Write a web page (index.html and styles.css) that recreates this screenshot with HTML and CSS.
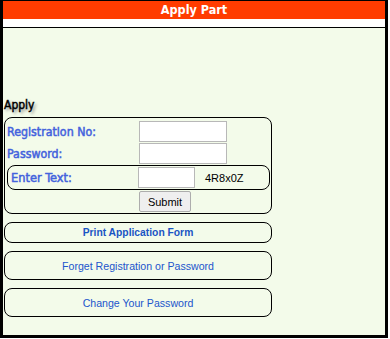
FILE: index.html
```html
<!DOCTYPE html>
<html>
<head>
<meta charset="utf-8">
<link rel="stylesheet" href="styles.css">
</head>
<body>
<div class="frame">
  <div class="header">Apply Part</div>
  <div class="header-gap"></div>
  <div class="content">
    <div class="apply-title">Apply</div>
    <div class="form-box">
      <div class="row">
        <label class="label">Registration No:</label>
        <input class="field" type="text">
      </div>
      <div class="row">
        <label class="label">Password:</label>
        <input class="field" type="password">
      </div>
      <div class="captcha-box">
        <label class="label captcha-label">Enter Text:</label>
        <input class="field short" type="text">
        <span class="captcha-code">4R8x0Z</span>
      </div>
      <div class="row submit-row">
        <span class="label"></span>
        <button class="submit" type="button">Submit</button>
      </div>
    </div>
    <div class="link-box print">Print Application Form</div>
    <div class="link-box tall">Forget Registration or Password</div>
    <div class="link-box tall">Change Your Password</div>
  </div>
</div>
</body>
</html>
```
FILE: styles.css
```css
html, body {
  margin: 0;
  padding: 0;
  background: #ffffff;
}
body {
  font-family: "DejaVu Sans", Verdana, sans-serif;
}
.frame {
  width: 382px;
  height: 334px;
  border: 3px solid #000;
  border-top-width: 1px;
  background: #f3fbea;
  display: flex;
  flex-direction: column;
}
.header {
  height: 18px;
  background: #ff3c00;
  color: #fff;
  font-family: "DejaVu Sans Condensed", "DejaVu Sans", sans-serif;
  font-weight: bold;
  font-size: 12.5px;
  line-height: 18px;
  text-align: center;
}
.header-gap {
  height: 8px;
  background: #fff;
  border-bottom: 1px solid #000;
}
.content {
  padding: 67px 0 0 1px;
}
.apply-title {
  font-family: "DejaVu Sans Condensed", "DejaVu Sans", sans-serif;
  font-size: 12px;
  -webkit-text-stroke: 0.45px #000;
  line-height: 20px;
  height: 22px;
  color: #000;
  text-shadow: 2px 2px 3px #888;
}
.form-box {
  width: 266px;
  border: 1px solid #000;
  border-radius: 8px;
  padding: 3px 0 1px 0;
}
.row {
  display: flex;
  align-items: center;
  height: 21px;
  margin-bottom: 1px;
}
.label {
  width: 132px;
  padding-left: 2px;
  font-family: "DejaVu Sans Condensed", "DejaVu Sans", sans-serif;
  font-size: 12.3px;
  -webkit-text-stroke: 0.5px #4463dd;
  color: #4463dd;
  flex: none;
}
.field {
  box-sizing: border-box;
  width: 88px;
  height: 21px;
  margin: 0;
  border: 1px solid #b8b8b8;
  background: #fff;
  padding: 0;
}
.field.short {
  width: 57px;
}
.captcha-box {
  display: flex;
  align-items: center;
  margin: 0 1px 1px 2px;
  height: 23px;
  border: 1px solid #000;
  border-radius: 8px;
}
.captcha-label {
  width: 127px;
  padding-left: 3px;
  font-size: 12.7px;
}
.captcha-code {
  margin-left: 10px;
  font-family: "Liberation Sans", Arial, sans-serif;
  font-size: 11px;
  color: #000;
}
.submit-row {
  margin-top: 1px;
  margin-bottom: 0;
}
.submit {
  box-sizing: border-box;
  width: 52px;
  height: 21px;
  margin: 0;
  padding: 0;
  border: 1px solid #adadad;
  border-radius: 2px;
  background: #efefef;
  font-family: "Liberation Sans", Arial, sans-serif;
  font-size: 11px;
  color: #000;
}
.link-box {
  box-sizing: border-box;
  width: 268px;
  margin-top: 8px;
  border: 1px solid #000;
  border-radius: 8px;
  text-align: center;
  font-family: "Liberation Sans", Arial, sans-serif;
  font-size: 10.6px;
  color: #2255cc;
  display: flex;
  align-items: center;
  justify-content: center;
}
.link-box.print {
  height: 21px;
  font-weight: bold;
  font-size: 10.3px;
  color: #1a55c4;
}
.link-box.tall {
  height: 29px;
}
```
